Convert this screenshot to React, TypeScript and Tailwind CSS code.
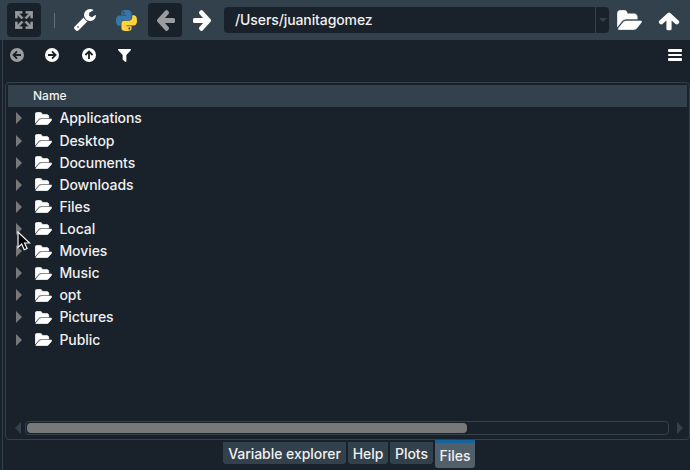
import type { ReactNode } from 'react';

const FONT = "font-['Inter','Liberation_Sans',sans-serif]";

function ArrowIcon({ className }: { className: string }) {
  return (
    <svg viewBox="30 139 1634 1558" preserveAspectRatio="none" className={className} fill="currentColor">
      <path d="M1664 896v128q0 53-32.5 90.5t-84.5 37.5h-704l293 294q38 36 38 90t-38 90l-75 76q-37 37-90 37-52 0-91-37l-651-652q-37-37-37-90 0-52 37-91l651-650q38-38 91-38 52 0 90 38l75 74q38 38 38 91t-38 91l-293 293h704q52 0 84.5 37.5t32.5 90.5z" transform="translate(0 -42)" />
    </svg>
  );
}

function CircleArrow({ className }: { className: string }) {
  return (
    <svg viewBox="0 0 14 14" className={className}>
      <circle cx="7" cy="7" r="7" fill="currentColor" />
      <path d="M11 7H4M7 3.400 3.400 7 7 10.600" fill="none" stroke="#19212b" strokeWidth="1.800" />
    </svg>
  );
}

function FolderIcon({ className, strokeWidth = 36 }: { className: string; strokeWidth?: number }) {
  return (
    <svg viewBox="-20 108 1919 1448" preserveAspectRatio="none" className={className} fill="currentColor" stroke="currentColor" strokeWidth={strokeWidth}>
      <path d="M1879 952q0 31-31 66l-336 396q-43 51-120.5 86.5t-143.5 35.5h-1088q-34 0-60.5-13t-26.5-43q0-31 31-66l336-396q43-51 120.5-86.5t143.5-35.5h1088q34 0 60.5 13t26.5 43zm-343-344v160h-832q-94 0-197 47.5t-164 119.5l-337 396-5 6q0-4-.5-12.5t-.5-12.5v-960q0-92 66-158t158-66h320q92 0 158 66t66 158v32h544q92 0 158 66t66 158z" />
    </svg>
  );
}

function WrenchIcon() {
  return (
    <svg viewBox="85 128 1641 1643" className="h-[22px] w-[22px]" fill="currentColor">
      <path d="M448 1472q0-26-19-45t-45-19-45 19-19 45 19 45 45 19 45-19 19-45zm644-420l-682 682q-37 37-90 37-52 0-91-37l-106-108q-38-36-38-90 0-53 38-91l681-681q39 98 114.5 173.5t173.5 114.5zm634-435q0 39-23 106-47 134-164.5 217.5t-258.5 83.5q-185 0-316.5-131.5t-131.5-316.5 131.5-316.5 316.5-131.5q58 0 121.5 16.5t107.5 46.5q16 11 16 28t-16 28l-293 169v224l193 107q5-3 79-48.5t135.5-81 70.5-35.5q15 0 23.5 10t8.5 25z" />
    </svg>
  );
}

function ExpandIcon() {
  return (
    <svg viewBox="2.7 2.7 18.6 18.6" className="mr-px h-[18px] w-[18px] text-[#9a9c9f]" fill="currentColor" stroke="currentColor" strokeWidth=".7">
      <path d="M9.5,13.09L10.91,14.5L6.41,19H10V21H3V14H5V17.59L9.5,13.09M10.91,9.5L9.5,10.91L5,6.41V10H3V3H10V5H6.41L10.91,9.5M14.5,13.09L19,17.59V14H21V21H14V19H17.59L13.09,14.5L14.5,13.09M13.09,9.5L17.59,5H14V3H21V10H19V6.41L14.5,10.91L13.09,9.5Z" />
    </svg>
  );
}

function PythonIcon() {
  const half = 'M54.9 0c-4.6 0-9 .4-12.8 1.1C30.8 3.1 28.7 7.3 28.7 15v10.2h26.8v3.4H18.7c-7.8 0-14.6 4.7-16.8 13.6-2.5 10.2-2.6 16.6 0 27.3 1.9 7.9 6.5 13.6 14.3 13.6h9.2V70.9c0-8.9 7.7-16.7 16.8-16.7h26.7c7.5 0 13.4-6.1 13.4-13.6V15c0-7.3-6.1-12.7-13.4-13.9C64.3.3 59.500 0 54.900 0zM40.400 8.200c2.800 0 5 2.300 5 5.100s-2.200 5.100-5 5.100-5-2.300-5-5.100 2.200-5.100 5-5.100z';
  return (
    <svg viewBox="0 0 111 111" className="h-[21px] w-[21px]">
      <path d={half} fill="#3776ab" />
      <path d={half} fill="#ffd43b" transform="rotate(180 55.500 55.500)" />
    </svg>
  );
}

function ToolButton({ children }: { children: ReactNode }) {
  return <div className="flex h-[34px] w-[34px] shrink-0 items-center justify-center rounded-[4px] bg-[#19212b]">{children}</div>;
}

function Toolbar() {
  return (
    <header className="flex h-10 shrink-0 items-center bg-[#32414b] pl-[7px] text-white">
      <ToolButton><ExpandIcon /></ToolButton>
      <div className="ml-[13px] h-[15px] w-px bg-[#60717d]" />
      <div className="ml-[19px]"><WrenchIcon /></div>
      <div className="ml-[19.5px]"><PythonIcon /></div>
      <div className="ml-[11.5px]">
        <ToolButton><ArrowIcon className="h-[21px] w-[20px] text-[#9a9c9f]" /></ToolButton>
      </div>
      <ArrowIcon className="ml-[10.5px] h-[21px] w-[20px] rotate-180" />
      <div className="ml-[11.5px] flex h-[26px] w-[385px] shrink-0 rounded-[4px] bg-[#19212b]">
        <div className="flex-1 pl-[11px] text-[14px] font-medium leading-[26px] text-[#f0f0f0]">
          <span className="tracking-[-0.100px]">/Users/juanitagomez</span>
        </div>
        <div className="flex w-[14px] items-center justify-center border-l border-[#32414b]">
          <svg viewBox="0 0 8 4" className="h-1 w-2"><path d="M0 0h8L4 4z" fill="#32414b" /></svg>
        </div>
      </div>
      <FolderIcon className="ml-[8px] h-[20px] w-[25px]" />
      <ArrowIcon className="ml-[17px] h-[21px] w-[20px] rotate-90" />
    </header>
  );
}

function PaneBar() {
  return (
    <div className="flex h-[30px] shrink-0 items-center pl-[7px] text-white">
      <CircleArrow className="-ml-[0.5px] h-[14px] w-[14px] text-[#9a9c9f]" />
      <CircleArrow className="ml-[21.5px] h-[14px] w-[14px] rotate-180" />
      <CircleArrow className="ml-[22.500px] h-[14px] w-[14px] rotate-90" />
      <svg viewBox="0 0 14 13" className="ml-[22.500px] mt-px h-[13px] w-[13px]" fill="currentColor" preserveAspectRatio="none">
        <path d="M.8 0h12.400c.8 0 1 .8.6 1.200L9 6v6.300c0 .7-.6.9-1.100.5L5.400 11c-.3-.3-.4-.5-.4-.8V6L.2 1.200C-.2.8 0 0 .8 0z" />
      </svg>
      <div className="ml-auto mr-[8.5px] flex w-[14px] flex-col gap-[2px]">
        <div className="h-[3px] rounded-[1px] bg-white" />
        <div className="h-[2px] rounded-[1px] bg-white" />
        <div className="h-[3px] rounded-[1px] bg-white" />
      </div>
    </div>
  );
}

const folders = [
  'Applications',
  'Desktop',
  'Documents',
  'Downloads',
  'Files',
  'Local',
  'Movies',
  'Music',
  'opt',
  'Pictures',
  'Public',
];

function Triangle({ className, color }: { className: string; color: string }) {
  return (
    <svg viewBox="0 0 6 12" preserveAspectRatio="none" className={className}><path d="M0 0L6 6L0 12z" fill={color} /></svg>
  );
}

function FileTree() {
  return (
    <section className="relative mt-[12px] ml-[2px] flex h-[358px] w-[685px] flex-col rounded-[4px] border border-[#32414b] pt-[2px]">
      <div className="ml-[2px] mr-[2px] h-[22px] bg-[#32414b] pl-[25px] text-[12px] font-medium leading-[22px] text-[#f0f0f0]">Name</div>
      <div className="flex flex-col pt-[0.4px]">
        {folders.map((name) => (
          <div key={name} className="flex h-[22.120px] items-center pl-[10px] text-white">
            <Triangle className="h-[12px] w-[6px]" color="#787878" />
            <FolderIcon className="ml-[13.400px] h-[13px] w-[17px]" strokeWidth={75} />
            <span className="ml-[7px] text-[14px] font-medium leading-[22px] tracking-[-0.060px] text-[#f0f0f0]">{name}</span>
          </div>
        ))}
      </div>
      <div className="mt-auto mb-[4px] flex h-[14px] items-center pl-[9px]">
        <Triangle className="h-[12px] w-[6px] rotate-180" color="#32414b" />
        <div className="ml-[4px] flex h-[14px] w-[644px] items-center rounded-[4px] border border-[#32414b] pl-px">
          <div className="h-[10px] w-[440px] rounded-[4px] bg-[#787878]" />
        </div>
        <Triangle className="ml-[8px] h-[12px] w-[6px]" color="#32414b" />
      </div>
      <svg viewBox="0 0 14 20" className="absolute left-[10.500px] top-[147.500px] h-[20px] w-[14px]">
        <path d="M1 1v15.500l3.700-3.400 2.500 5.700 2.900-1.300-2.500-5.500h5z" fill="#050505" stroke="#f5f5f5" strokeWidth="1.200" />
      </svg>
    </section>
  );
}

function Tabs() {
  return (
    <nav className="flex items-start pl-[220px] text-[14px] font-medium tracking-[-0.050px] text-[#f0f0f0]">
      <div className="mt-[2px] h-[22px] w-[123px] rounded-b-[3px] bg-[#32414b] text-center leading-[23px]">Variable explorer</div>
      <div className="mt-[2px] ml-[2px] h-[22px] w-[40px] rounded-b-[3px] bg-[#32414b] text-center leading-[23px]">Help</div>
      <div className="mt-[2px] ml-[2px] h-[22px] w-[43px] rounded-b-[3px] bg-[#32414b] text-center leading-[23px]">Plots</div>
      <div className="ml-[2px] h-[28px] w-[40px] rounded-b-[3px] border-t-[3px] border-[#1464a0] bg-[#505f69] text-center leading-[26px]">Files</div>
    </nav>
  );
}

export default function App() {
  return (
    <div className={`${FONT} flex h-[470px] w-[690px] flex-col overflow-hidden bg-[#19212b]`}>
      <Toolbar />
      <main className="ml-[2px] flex min-h-0 flex-1 flex-col border-l border-[#32414b]">
        <PaneBar />
        <FileTree />
        <Tabs />
      </main>
    </div>
  );
}
